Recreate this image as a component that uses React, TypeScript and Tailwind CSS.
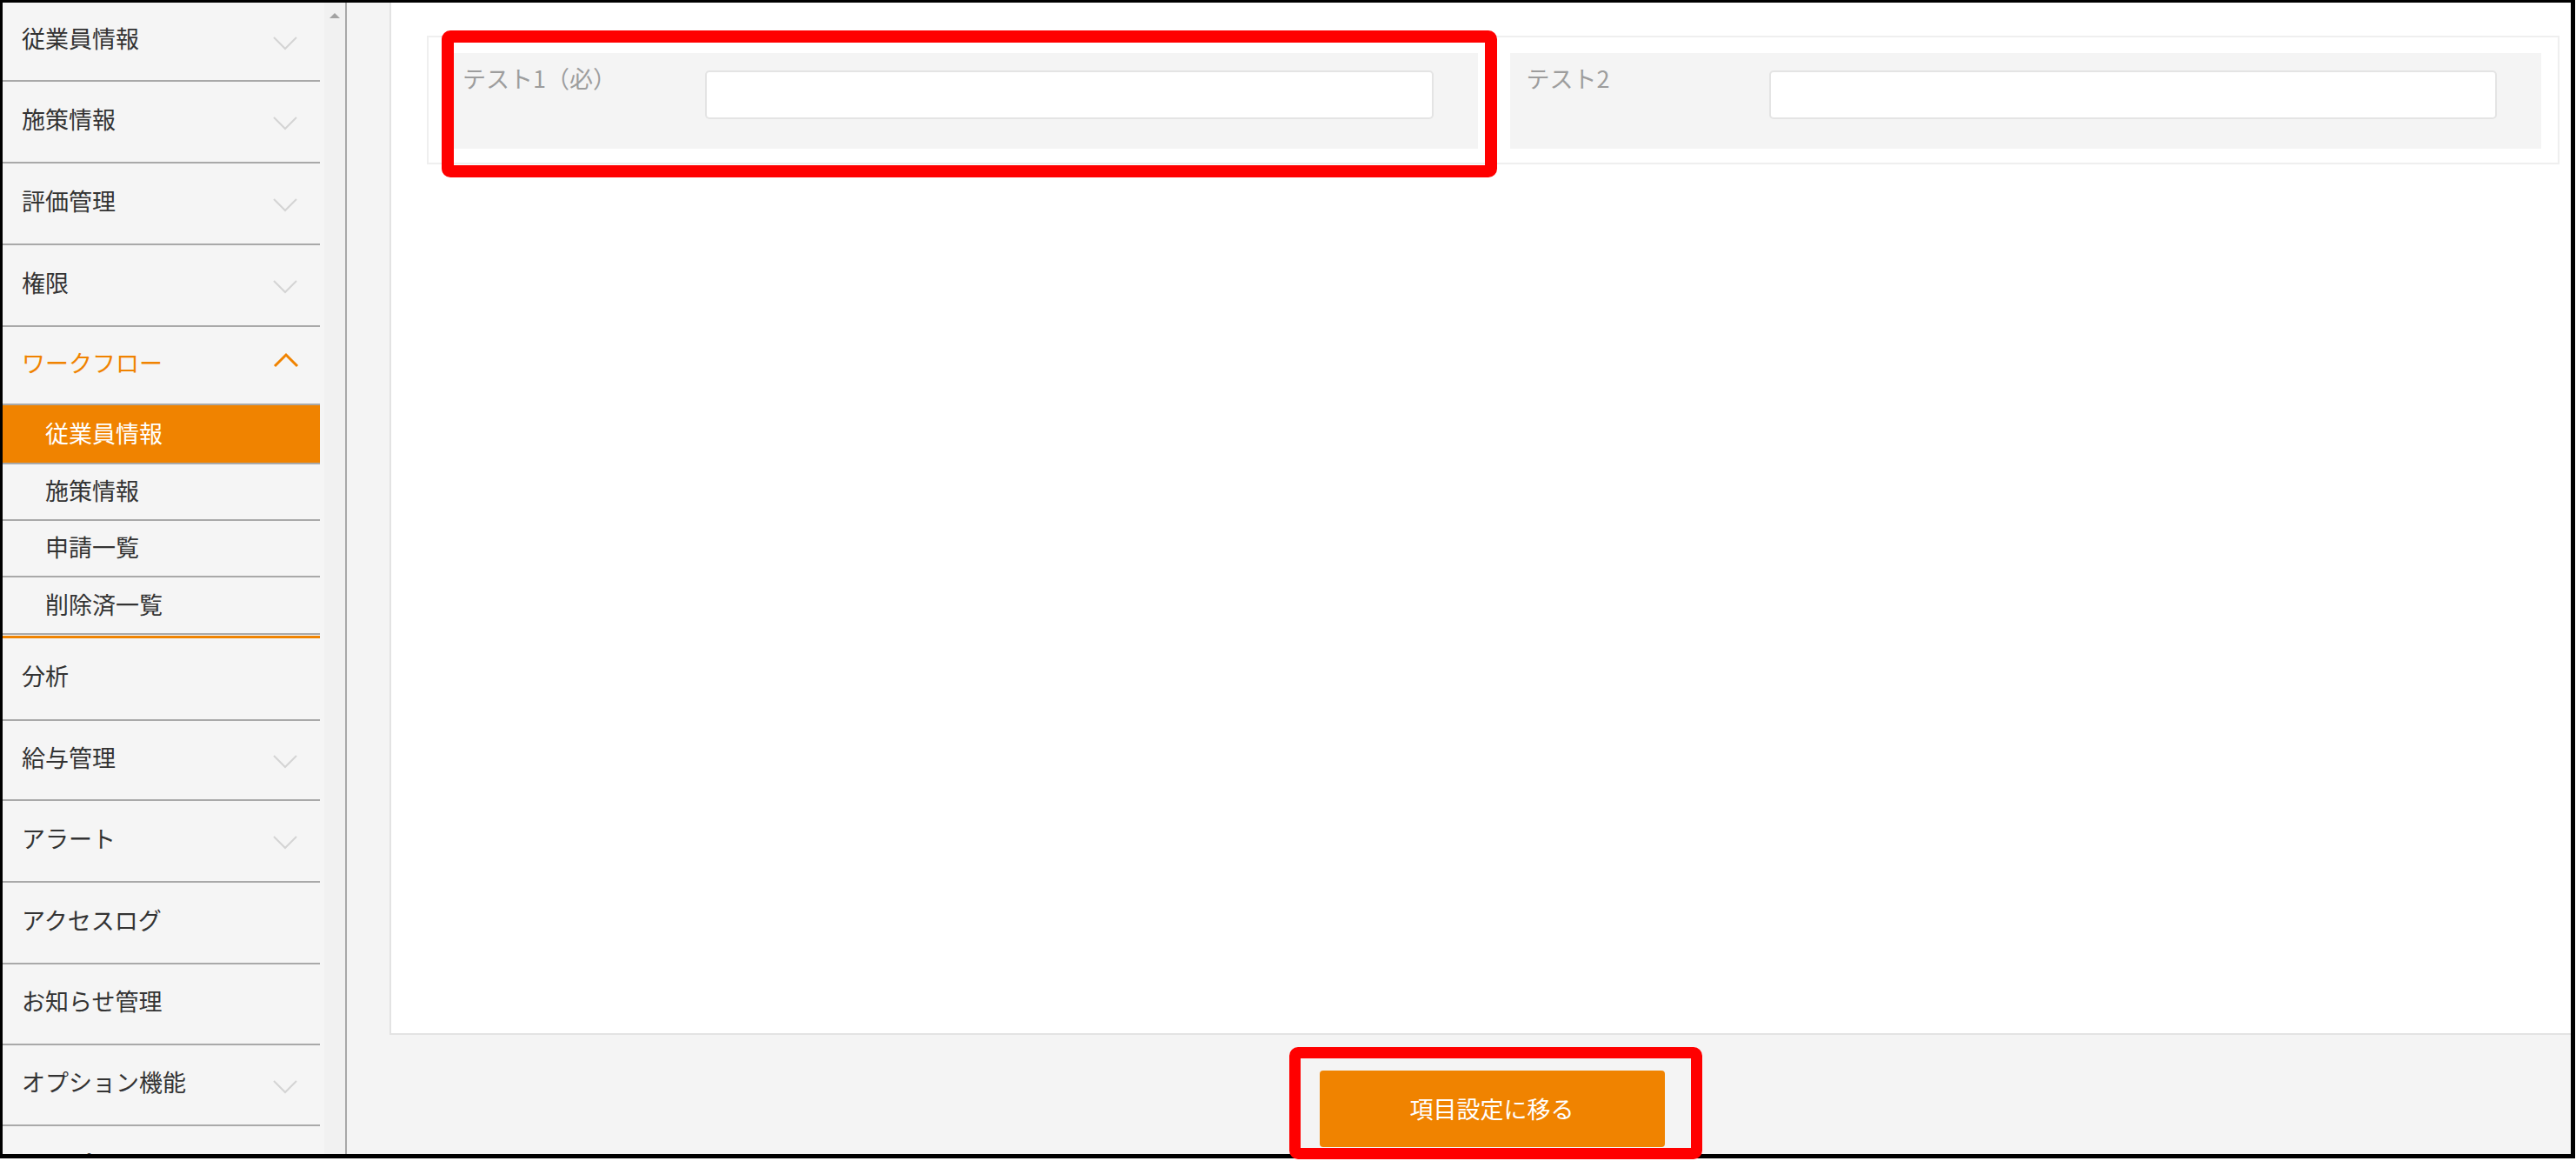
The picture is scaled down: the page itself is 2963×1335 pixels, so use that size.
import React from "react";

const FONT = { fontFamily: '"Noto Sans CJK JP", "Noto Sans", sans-serif' };

function ChevronDown() {
  return (
    <svg width="28" height="16" viewBox="0 0 28 16" className="mt-[10px]">
      <polyline points="1,1 14,14 27,1" fill="none" stroke="#d4d4d4" strokeWidth="2" />
    </svg>
  );
}

function ChevronUp() {
  return (
    <svg width="30" height="18" viewBox="0 0 30 18" className="-mt-[6px]">
      <polyline points="2,16 15,3 28,16" fill="none" stroke="#f08300" strokeWidth="3" />
    </svg>
  );
}

type Item = { label: string; chevron?: boolean; h: string };

const topItems: Item[] = [
  { label: "従業員情報", chevron: true, h: "h-[91px]" },
  { label: "施策情報", chevron: true, h: "h-[94px]" },
  { label: "評価管理", chevron: true, h: "h-[94px]" },
  { label: "権限", chevron: true, h: "h-[94px]" },
];

const bottomItems: Item[] = [
  { label: "分析", h: "h-[95px]" },
  { label: "給与管理", chevron: true, h: "h-[92px]" },
  { label: "アラート", chevron: true, h: "h-[94px]" },
  { label: "アクセスログ", h: "h-[94px]" },
  { label: "お知らせ管理", h: "h-[93px]" },
  { label: "オプション機能", chevron: true, h: "h-[93px]" },
  { label: "ヘルプ", h: "h-[94px]" },
];

function MenuRow({ item }: { item: Item }) {
  return (
    <div
      className={`${item.h} shrink-0 flex items-center justify-between pl-[22px] pr-[26px] pb-[6px] border-b-2 border-[#a9a9a9] text-[27px] text-[#333333]`}
    >
      <span>{item.label}</span>
      {item.chevron ? <ChevronDown /> : null}
    </div>
  );
}

const subItems = [
  { label: "施策情報", h: "h-[65px]" },
  { label: "申請一覧", h: "h-[65px]" },
  { label: "削除済一覧", h: "h-[66px]" },
];

function Field({ label }: { label: string }) {
  return (
    <div className="h-[110px] bg-[#f4f4f4] flex items-start pl-[19px] pt-[20px] pr-[51px]">
      <div className="w-[279px] shrink-0 text-[27px] leading-[30px] text-[#9d9d9d] -mt-[6px]">{label}</div>
      <div className="flex-1 h-[56px] bg-white border-2 border-[#e4e4e4] rounded-[5px]" />
    </div>
  );
}

export default function App() {
  return (
    <div className="relative w-[2963px] h-[1335px] bg-white overflow-hidden" style={FONT}>
      <div className="w-[2962px] h-[1332px] border-l-[3px] border-t-[3px] border-r-[5px] border-b-[5px] border-black flex">
        {/* Sidebar */}
        <div className="w-[370px] shrink-0 h-full bg-[#f5f5f5] overflow-hidden">
          <div className="w-[365px] flex flex-col">
            {topItems.map((it) => (
              <MenuRow key={it.label} item={it} />
            ))}
            <div className="h-[90px] shrink-0 flex items-center justify-between pl-[22px] pr-[24px] pb-[6px] border-b-2 border-[#a9a9a9] text-[27px] text-[#f08300]">
              <span>ワークフロー</span>
              <ChevronUp />
            </div>
            <div className="h-[68px] shrink-0 flex items-center pl-[49px] pb-[2px] bg-[#f08300] border-b-2 border-[#a9a9a9] text-[27px] text-white">
              従業員情報
            </div>
            {subItems.map((s) => (
              <div
                key={s.label}
                className={`${s.h} shrink-0 flex items-center pl-[49px] pb-[2px] border-b-2 border-[#a9a9a9] text-[27px] text-[#333333]`}
              >
                {s.label}
              </div>
            ))}
            <div className="h-[1px] shrink-0" />
            <div className="h-[3px] shrink-0 bg-[#f08300]" />
            {bottomItems.map((it) => (
              <MenuRow key={it.label} item={it} />
            ))}
          </div>
        </div>
        {/* Scrollbar */}
        <div className="w-[26px] shrink-0 h-full bg-[#f1f1f1] border-r-2 border-[#a8a8a8] flex justify-center pt-[12px]">
          <div className="w-0 h-0 border-l-[6px] border-r-[6px] border-b-[6px] border-l-transparent border-r-transparent border-b-[#a3a3a3]" />
        </div>
        {/* Main */}
        <div className="flex-1 h-full bg-[#f4f4f4] flex flex-col">
          <div className="h-[1187px] shrink-0 flex">
            <div className="w-[49px] shrink-0" />
            <div className="flex-1 bg-white border-l-2 border-b-2 border-[#e3e3e3] pt-[38px] pl-[41px] pr-[13px]">
              <div className="border-2 border-[#efefef] pt-[18px] pb-[16px] pl-[20px] pr-[19px] grid grid-cols-2 gap-[37px]">
                <Field label="テスト1（必）" />
                <Field label="テスト2" />
              </div>
            </div>
          </div>
          <div className="flex-1 flex justify-center pl-[76px] pt-[41px]">
            <button className="w-[397px] h-[88px] bg-[#f08300] rounded-[4px] text-white text-[27px]">
              項目設定に移る
            </button>
          </div>
        </div>
      </div>
      {/* Red annotation boxes */}
      <div className="absolute left-[508px] top-[35px] w-[1214px] h-[169px] border-[14px] border-[#ff0000] rounded-[10px]" />
      <div className="absolute left-[1483px] top-[1204px] w-[475px] h-[129px] border-[13px] border-[#ff0000] rounded-[10px]" />
    </div>
  );
}
